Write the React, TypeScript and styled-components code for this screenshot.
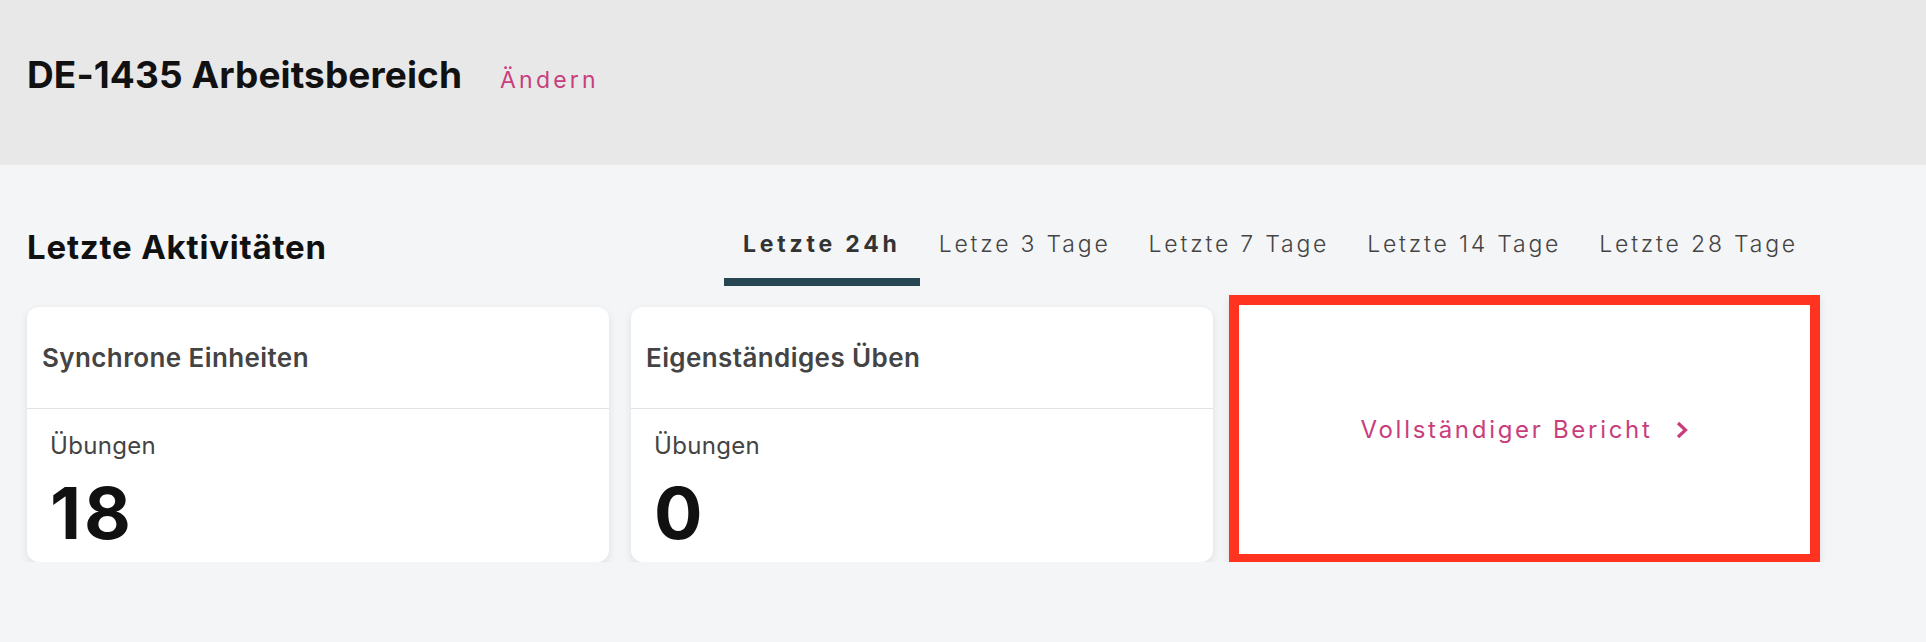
import { useState } from 'react';
import styled, { createGlobalStyle } from 'styled-components';

const GlobalStyle = createGlobalStyle`
  body {
    margin: 0;
    background: #f4f5f7;
    font-family: Inter, "Liberation Sans", sans-serif;
  }
`;

const Header = styled.header`
  height: 165px;
  background: #e8e8e8;
  display: flex;
  align-items: baseline;
  padding: 53px 0 0 27px;
  box-sizing: border-box;
  gap: 38px;
`;

const Title = styled.h1`
  margin: 0;
  font-size: 37px;
  line-height: 44px;
  font-weight: 700;
  letter-spacing: 0.1px;
  color: #111;
`;

const EditLink = styled.a`
  font-size: 23px;
  letter-spacing: 3.2px;
  color: #c83e7c;
  cursor: pointer;
`;

const Content = styled.main`
  width: 1790px;
  padding-left: 27px;
`;

const SectionHeader = styled.div`
  display: flex;
  justify-content: space-between;
  align-items: flex-end;
  margin-top: 62px;
`;

const SectionTitle = styled.h2`
  margin: 0 0 19px;
  font-size: 33px;
  line-height: 40px;
  font-weight: 700;
  letter-spacing: 0.8px;
  color: #111;
`;

const Tabs = styled.div`
  display: flex;
`;

const Tab = styled.button<{ $active?: boolean }>`
  font-family: inherit;
  background: none;
  border: none;
  border-bottom: 8px solid ${(p) => (p.$active ? '#264653' : 'transparent')};
  padding: 0 19px 19px;
  font-size: 23px;
  line-height: 30px;
  letter-spacing: ${(p) => (p.$active ? '3.8px' : '2.8px')};
  font-weight: ${(p) => (p.$active ? 700 : 300)};
  color: ${(p) => (p.$active ? '#333' : '#444')};
  cursor: pointer;
`;

const Grid = styled.div`
  display: grid;
  grid-template-columns: repeat(3, 1fr);
  gap: 22px;
  margin-top: 21px;
`;

const Card = styled.div`
  height: 255px;
  background: #fff;
  border-radius: 12px;
  box-shadow: 0 3px 8px rgba(0, 0, 0, 0.09);
  box-sizing: border-box;
  display: flex;
  flex-direction: column;
`;

const CardHeader = styled.div`
  height: 102px;
  box-sizing: border-box;
  border-bottom: 1px solid #e2e2e2;
  display: flex;
  align-items: center;
  padding: 0 15px;
  font-size: 26px;
  font-weight: 600;
  letter-spacing: 0.4px;
  color: #444;
`;

const CardBody = styled.div`
  padding: 22px 23px 0;
`;

const Label = styled.div`
  font-size: 24px;
  line-height: 30px;
  letter-spacing: 0.3px;
  color: #444;
`;

const Value = styled.div`
  margin-top: 16px;
  font-size: 72px;
  line-height: 72px;
  font-weight: 700;
  letter-spacing: 3px;
  color: #111;
`;

const ReportCard = styled(Card)`
  border-radius: 0;
  margin: -12px -3px -2px -6px;
  height: auto;
  border: 10px solid #ff3320;
  align-items: center;
  justify-content: center;
`;

const ReportLink = styled.a`
  display: flex;
  align-items: center;
  gap: 22px;
  font-size: 24px;
  letter-spacing: 2.7px;
  color: #c83e7c;
  cursor: pointer;
`;

const tabs = ['Letzte 24h', 'Letze 3 Tage', 'Letzte 7 Tage', 'Letzte 14 Tage', 'Letzte 28 Tage'];

const stats = [
  { title: 'Synchrone Einheiten', label: 'Übungen', value: 18 },
  { title: 'Eigenständiges Üben', label: 'Übungen', value: 0 },
];

export default function App() {
  const [active, setActive] = useState(0);

  return (
    <>
      <GlobalStyle />
      <Header>
        <Title>DE-1435 Arbeitsbereich</Title>
        <EditLink>Ändern</EditLink>
      </Header>
      <Content>
        <SectionHeader>
          <SectionTitle>Letzte Aktivitäten</SectionTitle>
          <Tabs>
            {tabs.map((t, i) => (
              <Tab key={t} $active={i === active} onClick={() => setActive(i)}>
                {t}
              </Tab>
            ))}
          </Tabs>
        </SectionHeader>
        <Grid>
          {stats.map((s) => (
            <Card key={s.title}>
              <CardHeader>{s.title}</CardHeader>
              <CardBody>
                <Label>{s.label}</Label>
                <Value>{s.value}</Value>
              </CardBody>
            </Card>
          ))}
          <ReportCard>
            <ReportLink>
              Vollständiger Bericht
              <svg width="14" height="18" viewBox="0 0 14 18" fill="none">
                <polyline points="3,2 10.5,9 3,16" stroke="#c83e7c" strokeWidth="3.2" />
              </svg>
            </ReportLink>
          </ReportCard>
        </Grid>
      </Content>
    </>
  );
}
